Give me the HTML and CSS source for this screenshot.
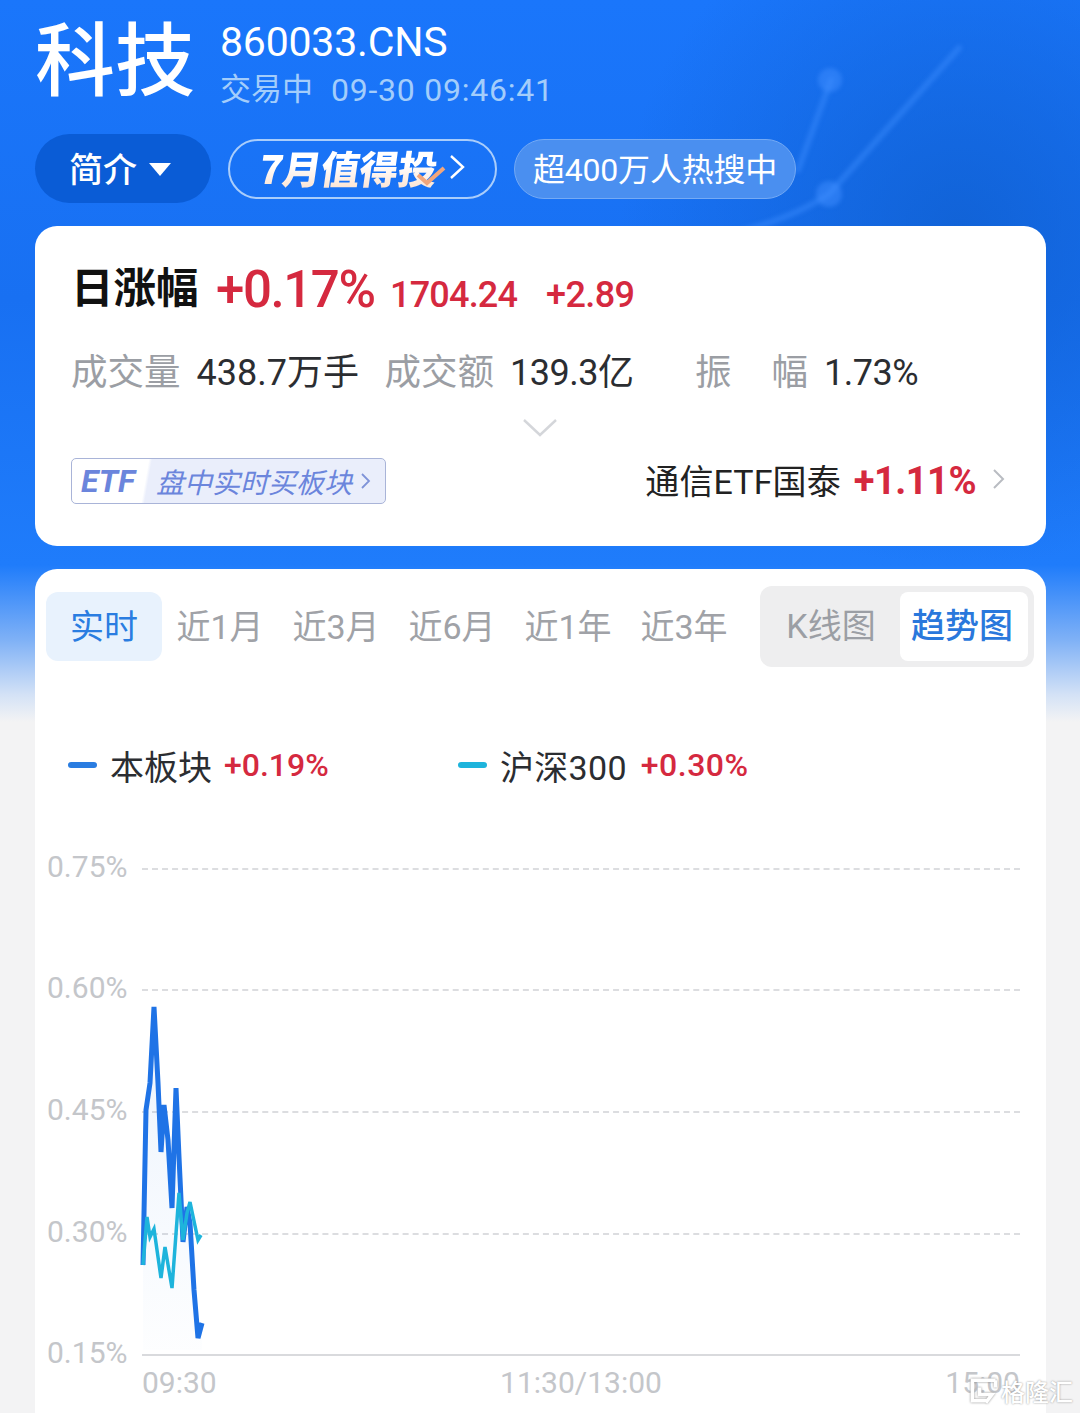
FILE: index.html
```html
<!DOCTYPE html>
<html lang="zh-CN">
<head>
<meta charset="utf-8">
<title>科技 860033.CNS</title>
<link rel="stylesheet" href="styles.css">
</head>
<body>
<div class="page">
  <svg class="hero-art" width="1080" height="560" viewBox="0 0 1080 560">
    <defs>
      <radialGradient id="heroShade" cx="960" cy="230" r="340" gradientUnits="userSpaceOnUse">
        <stop offset="0" stop-color="#0f5fd0" stop-opacity=".8"/>
        <stop offset="1" stop-color="#0f5fd0" stop-opacity="0"/>
      </radialGradient>
    </defs>
    <rect x="560" y="0" width="520" height="560" fill="url(#heroShade)"/>
    <g class="hero-lines">
      <path d="M648 250 L722 236 C770 225 805 210 829 194 L959 48"/>
      <path d="M798 170 L831 80"/>
      <circle cx="830" cy="80" r="12"/>
      <circle cx="829" cy="194" r="13"/>
    </g>
  </svg>

  <header class="hero">
    <h1 class="hero-name">科技</h1>
    <div class="hero-meta">
      <div class="hero-code">860033.CNS</div>
      <div class="hero-status"><span>交易中</span><span class="hero-time">09-30 09:46:41</span></div>
    </div>
  </header>

  <nav class="chips">
    <button class="chip chip-intro">简介<i class="caret"></i></button>
    <button class="chip chip-promo">
      <span class="promo-text">7月值得投</span>
      <svg class="promo-check" width="30" height="24" viewBox="0 0 30 24"><path d="M2 12 L11 20 L28 5" fill="none" stroke="#f2a67c" stroke-width="4"/></svg>
      <svg class="promo-arrow" width="16" height="26" viewBox="0 0 16 26"><path d="M2 2 L14 13 L2 24" fill="none" stroke="#fff" stroke-width="2.4"/></svg>
    </button>
    <button class="chip chip-hot">超400万人热搜中</button>
  </nav>

  <section class="card quote">
    <div class="quote-main">
      <span class="quote-title">日涨幅</span>
      <span class="quote-pct">+0.17%</span>
      <span class="quote-price">1704.24</span>
      <span class="quote-diff">+2.89</span>
    </div>
    <div class="quote-stats">
      <span class="stat-key">成交量</span><span class="stat-val stat-vol">438.7万手</span>
      <span class="stat-key">成交额</span><span class="stat-val stat-amt">139.3亿</span>
      <span class="stat-key stat-wide">振<b></b>幅</span><span class="stat-val">1.73%</span>
    </div>
    <svg class="quote-fold" width="36" height="20" viewBox="0 0 36 20"><path d="M2 2 L18 17 L34 2" fill="none" stroke="#d4d6da" stroke-width="2.4"/></svg>
    <div class="quote-foot">
      <div class="etf-tag">
        <span class="etf-name">ETF</span>
        <span class="etf-text">盘中实时买板块</span>
        <svg width="11" height="18" viewBox="0 0 11 18"><path d="M2 2 L9 9 L2 16" fill="none" stroke="#7f93d8" stroke-width="1.8"/></svg>
      </div>
      <div class="etf-link">
        <span class="etf-fund">通信ETF国泰</span>
        <span class="etf-pct">+1.11%</span>
        <svg width="14" height="24" viewBox="0 0 14 24"><path d="M2 3 L11 12 L2 21" fill="none" stroke="#b9bcc2" stroke-width="2"/></svg>
      </div>
    </div>
  </section>

  <section class="card trend">
    <div class="trend-bar">
      <div class="ranges">
        <span class="range range-on">实时</span>
        <span class="range">近1月</span>
        <span class="range">近3月</span>
        <span class="range">近6月</span>
        <span class="range">近1年</span>
        <span class="range">近3年</span>
      </div>
      <div class="modes">
        <span class="mode">K线图</span>
        <span class="mode mode-on">趋势图</span>
      </div>
    </div>

    <div class="legend">
      <div class="legend-item legend-a"><i class="swatch swatch-a"></i><span class="legend-name">本板块</span><span class="legend-pct">+0.19%</span></div>
      <div class="legend-item legend-b"><i class="swatch swatch-b"></i><span class="legend-name">沪深300</span><span class="legend-pct">+0.30%</span></div>
    </div>

    <div class="chart">
      <div class="tick"><span>0.75%</span><i></i></div>
      <div class="tick"><span>0.60%</span><i></i></div>
      <div class="tick"><span>0.45%</span><i></i></div>
      <div class="tick"><span>0.30%</span><i></i></div>
      <div class="tick tick-base"><span>0.15%</span><i></i></div>
      <div class="times"><span>09:30</span><span>11:30/13:00</span><span>15:00</span></div>
      <svg class="plot" width="100" height="360" viewBox="130 990 100 360">
        <defs>
          <linearGradient id="areaFill" x1="0" y1="0" x2="0" y2="1">
            <stop offset="0" stop-color="#2a7de1" stop-opacity=".09"/>
            <stop offset="1" stop-color="#2a7de1" stop-opacity=".01"/>
          </linearGradient>
        </defs>
        <path fill="url(#areaFill)" d="M143 1265 L146 1110 L150 1083 L154 1007 L158 1083 L161 1152 L164 1105 L168 1140 L172 1208 L176 1088 L179 1157 L183 1242 L187 1207 L190 1223 L194 1290 L198 1338 L202 1323 L202 1350 L143 1350 Z"/>
        <polyline class="line-a" points="143,1265 146,1110 150,1083 154,1007 158,1083 161,1152 164,1105 168,1140 172,1208 176,1088 179,1157 183,1242 187,1207 190,1223 194,1290 198,1338 202,1323"/>
        <polyline class="line-b" points="143,1265 147,1217 150,1237 154,1229 161,1278 165,1247 172,1288 179,1193 183,1240 187,1213 190,1202 198,1240 201,1235"/>
      </svg>
    </div>
  </section>

  <div class="brand">
    <svg width="32" height="30" viewBox="0 0 36 32"><path d="M31 4 H5 V27 H22 M13 12 V20 H27 L20 29 M31 4 V12" fill="none" stroke="#fff" stroke-width="4"/></svg>
    <span>格隆汇</span>
  </div>
</div>
</body>
</html>
```

FILE: styles.css
```css
* { box-sizing: border-box; }

html, body { margin: 0; padding: 0; }

body {
  font-family: "Noto Sans CJK SC", "Noto Sans", sans-serif;
  background: #f3f3f4;
}

.page {
  position: relative;
  width: 1080px;
  height: 1413px;
  overflow: hidden;
  padding: 0 34px 0 35px;
  background: linear-gradient(180deg, #1a76fb 0, #1870f2 300px, #1f7cfb 565px, #7fb1f6 640px, #d4e2f6 695px, #f3f3f4 722px);
}

.hero-art { position: absolute; left: 0; top: 0; }

.hero-lines {
  fill: #3f8dff;
  fill-opacity: .5;
  stroke: #3f8dff;
  stroke-opacity: .45;
  stroke-width: 6;
  stroke-linecap: round;
  filter: blur(2px);
}

.hero-lines path { fill: none; }
.hero-lines circle { stroke: none; }

.hero {
  position: relative;
  display: flex;
  align-items: flex-start;
  height: 134px;
}

.hero-name {
  margin: 10px 0 0;
  width: 185px;
  font-size: 80px;
  line-height: 88px;
  font-weight: 500;
  color: #fff;
}

.hero-meta { padding-top: 17px; }

.hero-code {
  font-family: Roboto, sans-serif;
  font-size: 41px;
  line-height: 50px;
  letter-spacing: -.2px;
  color: #fff;
}

.hero-status {
  display: flex;
  gap: 18px;
  margin-top: 1px;
  font-size: 31px;
  line-height: 44px;
  color: #a3cdfb;
  font-family: Roboto, "Noto Sans CJK SC", sans-serif;
}

.hero-time { font-size: 32px; letter-spacing: .75px; }

.chips {
  position: relative;
  display: flex;
  align-items: center;
  gap: 17px;
  height: 69px;
}

.chip {
  display: flex;
  align-items: center;
  justify-content: center;
  padding: 0 0 4px;
  height: 60px;
  border-radius: 30px;
  color: #fff;
  font-family: inherit;
  background: none;
}

.chip-intro {
  width: 176px;
  height: 69px;
  border: 0;
  border-radius: 35px;
  background: #0a5cd6;
  font-size: 34px;
  font-weight: 500;
  gap: 12px;
  padding: 0 6px 2px 0;
}

.caret {
  width: 0;
  height: 0;
  margin-top: 3px;
  border-left: 11px solid transparent;
  border-right: 11px solid transparent;
  border-top: 13px solid #fff;
}

.chip-promo {
  position: relative;
  width: 269px;
  border: 2px solid #a9cdfb;
  gap: 12px;
}

.promo-text {
  display: inline-block;
  font-size: 39px;
  font-weight: 900;
  letter-spacing: -.5px;
  transform: skewX(-8deg);
  background: linear-gradient(180deg, #fff 45%, #fbdcc8 100%);
  -webkit-background-clip: text;
  background-clip: text;
  color: transparent;
}

.promo-check { position: absolute; left: 186px; top: 22px; }

.chip-hot {
  width: 282px;
  border: 1.5px solid #74aaf5;
  background: #4a8ff0;
  font-size: 32px;
  letter-spacing: -.2px;
  font-family: Roboto, "Noto Sans CJK SC", sans-serif;
}

.card {
  position: relative;
  width: 1011px;
  background: #fff;
  border-radius: 22px;
}

.quote {
  margin-top: 23px;
  height: 320px;
  padding: 34px 36px 0 36px;
}

.quote-main {
  display: flex;
  align-items: baseline;
  height: 58px;
  color: #d5293f;
  font-family: Roboto, "Noto Sans CJK SC", sans-serif;
}

.quote-title {
  align-self: flex-start;
  margin-top: -5px;
  font-size: 42.5px;
  line-height: 60px;
  font-weight: 700;
  color: #111;
  width: 145px;
  font-family: "Noto Sans CJK SC", sans-serif;
}

.quote-pct { font-size: 51px; font-weight: 500; width: 174px; letter-spacing: -1.4px; }
.quote-price { font-size: 36px; font-weight: 500; width: 156px; letter-spacing: -.8px; }
.quote-diff { font-size: 36px; font-weight: 500; letter-spacing: -.6px; }

.quote-stats {
  display: flex;
  align-items: baseline;
  margin-top: 25px;
  height: 50px;
  font-family: Roboto, "Noto Sans CJK SC", sans-serif;
}

.stat-key {
  display: flex;
  font-size: 36.5px;
  color: #9b9ea4;
  margin-right: 16px;
  font-family: "Noto Sans CJK SC", sans-serif;
}

.stat-wide b { width: 40px; }
.stat-wide { margin-right: 16px; }

.stat-val { font-size: 36px; color: #2b2d31; letter-spacing: -.5px; }
.stat-vol { width: 188px; letter-spacing: 0; }
.stat-amt { width: 185px; }

.quote-fold { display: block; margin: 25px auto 0; transform: translateX(-1px); }

.quote-foot {
  display: flex;
  align-items: center;
  justify-content: space-between;
  margin-top: 16px;
  height: 50px;
}

.etf-tag {
  display: flex;
  align-items: center;
  align-self: flex-end;
  width: 315px;
  height: 46px;
  border: 1px solid #a9b4d8;
  border-radius: 5px;
  background: linear-gradient(100deg, #fff 0 24%, #eaeefb 25%);
  color: #6b85dc;
}

.etf-name {
  width: 80px;
  padding-left: 9px;
  font-family: Roboto, sans-serif;
  font-size: 32px;
  font-weight: 700;
  font-style: italic;
}

.etf-text {
  width: 204px;
  font-size: 28px;
  font-style: italic;
  margin-left: 4px;
}

.etf-link {
  display: flex;
  align-items: center;
  margin-right: 4px;
  font-family: Roboto, "Noto Sans CJK SC", sans-serif;
}

.etf-fund { font-size: 34px; color: #222; margin-right: 13px; letter-spacing: .1px; }
.etf-pct { padding-top: 4px; font-size: 38px; font-weight: 700; color: #d5293f; margin-right: 16px; letter-spacing: -.5px; }

.trend {
  margin-top: 23px;
  height: 900px;
  padding: 17px 12px 0 11px;
}

.trend-bar {
  display: flex;
  justify-content: space-between;
  align-items: center;
  height: 81px;
}

.ranges { display: flex; align-items: center; }

.range {
  width: 116px;
  height: 69px;
  line-height: 71px;
  text-align: center;
  font-size: 34px;
  color: #a0a2a7;
  font-family: Roboto, "Noto Sans CJK SC", sans-serif;
}

.range-on {
  background: #e8f2fd;
  border-radius: 12px;
  color: #2a7de1;
}

.modes {
  display: flex;
  align-items: center;
  justify-content: flex-end;
  width: 274px;
  height: 81px;
  padding: 0 6px;
  background: #eeeeef;
  border-radius: 12px;
}

.mode {
  flex: none;
  width: 134px;
  padding-right: 4px;
  font-size: 34px;
  line-height: 69px;
  text-align: center;
  color: #9b9ea4;
  font-family: Roboto, "Noto Sans CJK SC", sans-serif;
}

.mode-on {
  width: 128px;
  padding: 0 4px 0 0;
  background: #fff;
  border-radius: 8px;
  color: #2a78dc;
  font-weight: 500;
}

.legend {
  display: flex;
  align-items: center;
  height: 44px;
  margin-top: 76px;
  padding-left: 22px;
}

.legend-item { display: flex; align-items: center; }
.legend-a { width: 390px; }

.swatch { width: 29px; height: 6px; border-radius: 3px; margin-right: 13px; }
.swatch-a { background: #2a7de1; }
.swatch-b { background: #1eb4dc; }

.legend-name {
  font-size: 34px;
  color: #2b2d31;
  margin-right: 12px;
  font-family: Roboto, "Noto Sans CJK SC", sans-serif;
}

.legend-pct {
  font-size: 32px;
  font-weight: 500;
  color: #d5293f;
  font-family: Roboto, sans-serif;
}

.legend-b .legend-name { margin-right: 14px; letter-spacing: .3px; }
.legend-b .legend-pct { letter-spacing: .5px; }

.chart {
  position: relative;
  margin-top: 21px;
  margin-left: -11px;
  width: 1011px;
}

.tick {
  display: flex;
  align-items: center;
  height: 121.6px;
  padding-left: 12px;
  color: #c4c6ca;
  font-size: 30px;
  font-family: Roboto, sans-serif;
}

.tick span { width: 95px; padding-bottom: 5px; }

.tick i {
  display: block;
  width: 878px;
  border-top: 2px dashed #dcdde0;
}

.tick-base { height: 44px; margin-top: 39px; }
.tick-base i { border-top: 2px solid #d9dadd; }

.times {
  display: flex;
  justify-content: space-between;
  width: 878px;
  margin: -12px 0 0 107px;
  color: #c4c6ca;
  font-size: 30px;
  font-family: Roboto, sans-serif;
}

.plot { position: absolute; left: 95px; top: 182px; overflow: visible; }
.plot polyline { fill: none; stroke-linejoin: miter; }
.line-a { stroke: #1f73e6; stroke-width: 5; }
.line-b { stroke: #1eb4dc; stroke-width: 3.5; }

.brand {
  position: absolute;
  right: 7px;
  bottom: 5px;
  display: flex;
  align-items: center;
  gap: 1px;
  color: #fff;
  font-size: 24px;
  font-weight: 500;
  text-shadow: 0 0 2px #8a8a8a;
}

.brand svg { filter: drop-shadow(0 0 1px #8a8a8a); }
```
